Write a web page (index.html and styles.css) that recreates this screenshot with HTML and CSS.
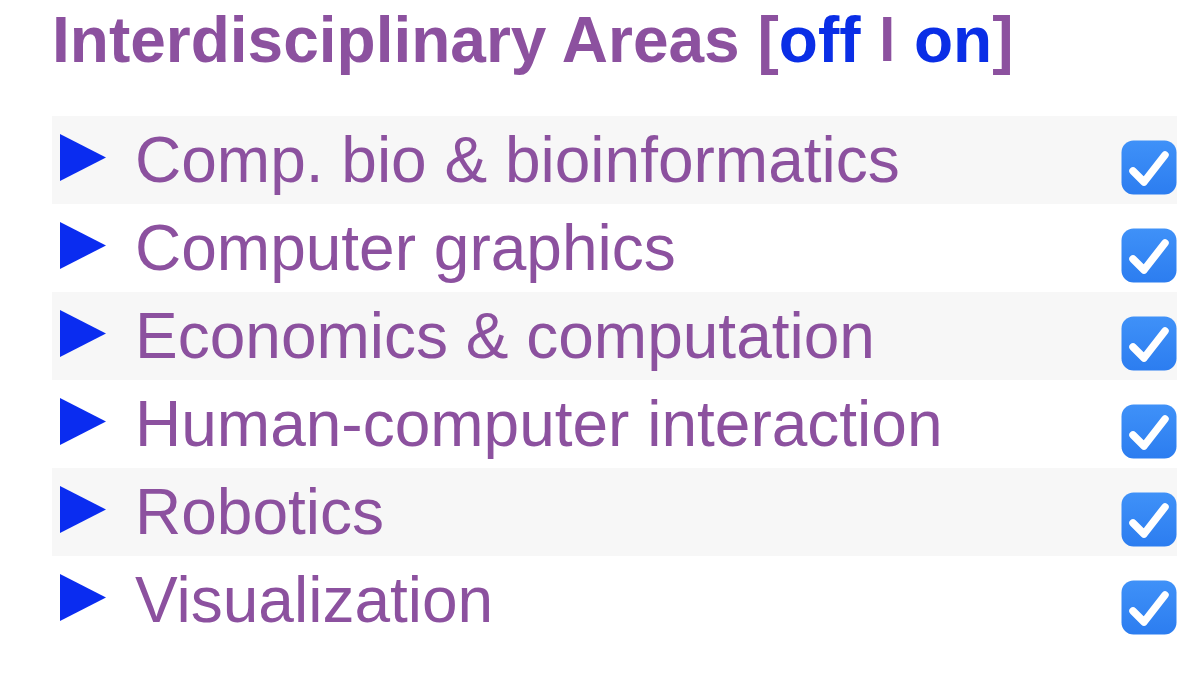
FILE: index.html
```html
<!DOCTYPE html>
<html>
<head>
<meta charset="utf-8">
<link rel="stylesheet" href="styles.css">
</head>
<body>
<div class="panel">
  <h1 class="title">Interdisciplinary Areas <span class="br">[</span><a class="lnk">off</a> <span class="sep">|</span> <a class="lnk">on</a><span class="br">]</span></h1>
  <ul class="list">
    <li class="row alt"><svg class="tri" viewBox="0 0 46 47"><polygon points="0,0 46,23.5 0,47"/></svg><span class="label">Comp. bio &amp; bioinformatics</span><svg class="cb" viewBox="0 0 56 55"><use href="#box"/></svg></li>
    <li class="row"><svg class="tri" viewBox="0 0 46 47"><polygon points="0,0 46,23.5 0,47"/></svg><span class="label">Computer graphics</span><svg class="cb" viewBox="0 0 56 55"><use href="#box"/></svg></li>
    <li class="row alt"><svg class="tri" viewBox="0 0 46 47"><polygon points="0,0 46,23.5 0,47"/></svg><span class="label">Economics &amp; computation</span><svg class="cb" viewBox="0 0 56 55"><use href="#box"/></svg></li>
    <li class="row"><svg class="tri" viewBox="0 0 46 47"><polygon points="0,0 46,23.5 0,47"/></svg><span class="label">Human-computer interaction</span><svg class="cb" viewBox="0 0 56 55"><use href="#box"/></svg></li>
    <li class="row alt"><svg class="tri" viewBox="0 0 46 47"><polygon points="0,0 46,23.5 0,47"/></svg><span class="label">Robotics</span><svg class="cb" viewBox="0 0 56 55"><use href="#box"/></svg></li>
    <li class="row"><svg class="tri" viewBox="0 0 46 47"><polygon points="0,0 46,23.5 0,47"/></svg><span class="label">Visualization</span><svg class="cb" viewBox="0 0 56 55"><use href="#box"/></svg></li>
  </ul>
</div>
<svg class="defs" width="0" height="0">
  <defs>
    <linearGradient id="g" x1="0" y1="0" x2="0" y2="1">
      <stop offset="0" stop-color="#3f91f8"/>
      <stop offset="1" stop-color="#2c7df0"/>
    </linearGradient>
    <g id="box">
      <rect x="0.5" y="0.5" width="55" height="54" rx="12" fill="url(#g)"/>
      <path d="M12 31 L23 42 L44 15" fill="none" stroke="#fff" stroke-width="7.5" stroke-linecap="round" stroke-linejoin="round"/>
    </g>
  </defs>
</svg>
</body>
</html>
```
FILE: styles.css
```css
html, body {
  margin: 0;
  padding: 0;
  background: #fff;
}
.panel {
  padding-left: 52px;
  width: 1125px;
  font-family: "Liberation Sans", Arial, sans-serif;
  color: #8c519f;
}
.title {
  margin: 0;
  padding-top: 3px;
  font-size: 64px;
  font-weight: bold;
  line-height: 74px;
  height: 113px;
  white-space: nowrap;
}
.sep {
  display: inline-block;
  transform: scaleY(0.727);
  transform-origin: 50% 18px;
}
.lnk {
  color: #0a2ee6;
}
.list {
  list-style: none;
  margin: 0;
  padding: 0;
}
.row {
  display: flex;
  align-items: flex-start;
  height: 88px;
}
.row.alt {
  background: #f7f7f7;
}
.tri {
  width: 46px;
  height: 47px;
  margin-left: 8px;
  margin-top: 18px;
  fill: #0a2cf0;
  flex: none;
}
.label {
  font-size: 64px;
  line-height: 88px;
  margin-left: 29px;
  white-space: nowrap;
  flex: 1;
}
.cb {
  width: 56px;
  height: 55px;
  margin-top: 24px;
  flex: none;
}
.defs {
  position: absolute;
}
```
